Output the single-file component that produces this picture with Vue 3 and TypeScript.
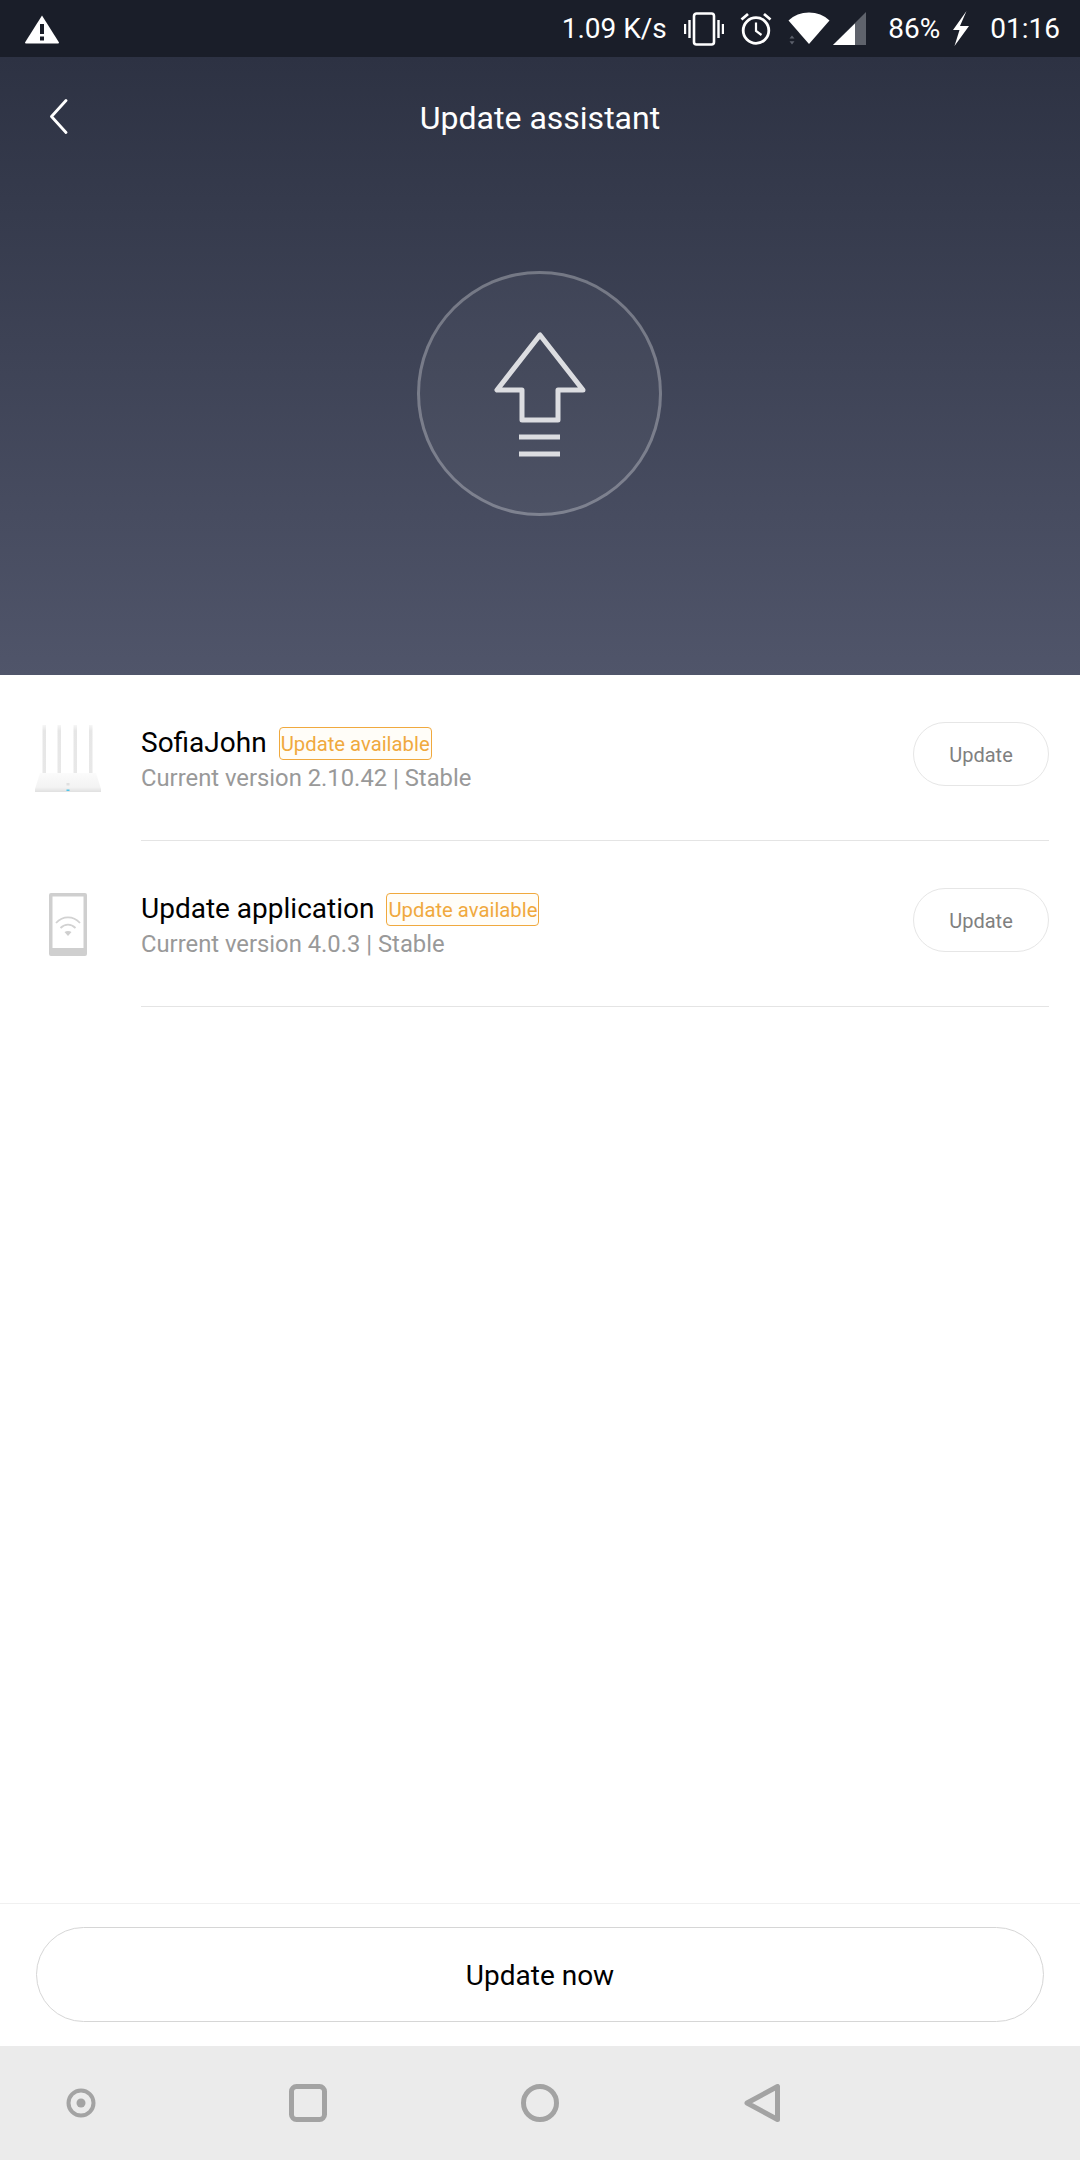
<script setup lang="ts">
interface Item {
  name: string
  version: string
  kind: 'router' | 'phone'
}
const items: Item[] = [
  { name: 'SofiaJohn', version: 'Current version 2.10.42 | Stable', kind: 'router' },
  { name: 'Update application', version: 'Current version 4.0.3 | Stable', kind: 'phone' },
]
</script>

<template>
  <div class="page">
    <header class="status">
      <svg class="warn" width="36" height="30" viewBox="0 0 36 30">
        <path d="M18 1.500 35 28.500a1 1 0 0 1-1 1H2a1 1 0 0 1-1-1Z" fill="#fff" />
        <rect x="16" y="10" width="4" height="10" fill="#1a1e29" />
        <rect x="16" y="22.500" width="4" height="4" fill="#1a1e29" />
      </svg>
      <div class="status-right">
        <span class="speed">1.09 K/s</span>
        <svg class="s-vib" width="40" height="34" viewBox="0 0 40 34" fill="none" stroke="#fff">
          <rect x="10" y="1.500" width="20" height="31" rx="2.500" stroke-width="2.600" />
          <path d="M5.500 8v18M1 12v10M34.500 8v18M39 12v10" stroke-width="2.400" />
        </svg>
        <svg class="s-alarm" width="32" height="33" viewBox="0 0 32 33" fill="none" stroke="#fff" stroke-width="2.800">
          <circle cx="16" cy="18.500" r="12.800" />
          <path d="M16 10.500v8.500l5.500 4" stroke-width="2.200" />
          <path d="M1.500 7.500 8 2M30.500 7.500 24 2" />
        </svg>
        <svg class="s-wifi" width="42" height="33" viewBox="0 0 42 33">
          <path d="M21 32 .5 8.500C6 3.200 13 .5 21 .5s15 2.700 20.500 8Z" fill="#fff" />
          <path d="M4 23.500 1.500 26.500h5ZM4 32.500 1.500 29.200h5Z" fill="#5c606b" />
        </svg>
        <svg class="s-signal" width="33" height="33" viewBox="0 0 33 33">
          <path d="M33 0V33H0Z" fill="#5f636c" />
          <path d="M22 11.500V33H0Z" fill="#fff" />
        </svg>
        <span class="pct">86%</span>
        <svg class="s-bolt" width="19" height="35" viewBox="0 0 19 35">
          <path d="M14.500 0 8 15H17L2.500 35 7.500 19H1Z" fill="#fff" />
        </svg>
        <span class="clock">01:16</span>
      </div>
    </header>

    <section class="hero">
      <div class="appbar">
        <svg class="back" width="19" height="35" viewBox="0 0 19 35" fill="none">
          <path d="M17 1.500 2.500 17.500 17 33.500" stroke="#fff" stroke-width="2.800" stroke-linecap="round" stroke-linejoin="round" />
        </svg>
        <h1 class="title">Update assistant</h1>
      </div>
      <div class="disc">
        <svg width="96" height="130" viewBox="0 0 96 130" fill="none" stroke="#dcdde1" stroke-width="5">
          <path d="M48 3 5 58H30V88H66V58H91Z" stroke-linejoin="round" />
          <path d="M27 105H68M27 122H68" />
        </svg>
      </div>
    </section>

    <main class="list">
      <article v-for="item in items" :key="item.name" class="row">
        <div class="thumb">
          <svg v-if="item.kind === 'router'" width="66" height="68" viewBox="0 0 66 68">
            <defs>
              <linearGradient id="bodyFill" x1="0" y1="0" x2="0" y2="1">
                <stop offset="0" stop-color="#fbfbfb" />
                <stop offset="0.75" stop-color="#f3f3f3" />
                <stop offset="1" stop-color="#e0e0e0" />
              </linearGradient>
              <linearGradient id="mast" x1="0" y1="0" x2="0" y2="1">
                <stop offset="0" stop-color="#f6f6f6" />
                <stop offset="0.12" stop-color="#e6e6e6" />
                <stop offset="1" stop-color="#e8e8e8" />
              </linearGradient>
            </defs>
            <g fill="url(#mast)">
              <rect x="7.500" y="1" width="3.500" height="49" />
              <rect x="22.500" y="1" width="3.500" height="49" />
              <rect x="38.500" y="1" width="3.500" height="49" />
              <rect x="54" y="1" width="3.500" height="49" />
            </g>
            <path d="M5 49H61L66 65V68H0V65Z" fill="url(#bodyFill)" />
            <rect x="31.500" y="65.500" width="3" height="1.500" fill="#4fc3e8" />
            <rect x="31.500" y="59" width="3" height="2.500" fill="#e0e0e0" />
          </svg>
          <svg v-else width="38" height="63" viewBox="0 0 38 63">
            <path fill-rule="evenodd" d="M2 0H36a2 2 0 0 1 2 2V61a2 2 0 0 1-2 2H2a2 2 0 0 1-2-2V2a2 2 0 0 1 2-2ZM3.500 3.500V55H34.500V3.500Z" fill="#cfcfcf" />
            <path d="M7 30C14 22.500 24 22.500 31 30M11.500 35C16 30.500 22 30.500 26.500 35" fill="none" stroke="#d2d2d2" stroke-width="1.800" />
            <path d="M19 43 15.500 39C17.500 37.500 20.500 37.500 22.500 39Z" fill="#cfcfcf" />
          </svg>
        </div>
        <div class="body">
          <div class="info">
            <div class="name-line">
              <span class="name">{{ item.name }}</span>
              <span class="tag">Update available</span>
            </div>
            <div class="version">{{ item.version }}</div>
          </div>
          <button class="small-btn" type="button">Update</button>
        </div>
      </article>
    </main>

    <footer class="action">
      <button class="now-btn" type="button">Update now</button>
    </footer>

    <nav class="navbar">
      <svg width="30" height="30" viewBox="0 0 30 30" fill="none">
        <circle cx="15" cy="15" r="12.500" stroke="#a3a3a3" stroke-width="4" />
        <circle cx="15" cy="15" r="4.500" fill="#a3a3a3" />
      </svg>
      <svg width="38" height="38" viewBox="0 0 38 38" fill="none">
        <rect x="2.500" y="2.500" width="33" height="33" rx="5" stroke="#a3a3a3" stroke-width="5" />
      </svg>
      <svg width="38" height="38" viewBox="0 0 38 38" fill="none">
        <circle cx="19" cy="19" r="16.500" stroke="#a3a3a3" stroke-width="5" />
      </svg>
      <svg width="36" height="38" viewBox="0 0 36 38" fill="none">
        <path d="M33.500 2.500V35.500L3 19Z" stroke="#a3a3a3" stroke-width="5" stroke-linejoin="round" />
      </svg>
    </nav>
  </div>
</template>

<style scoped>
.page {
  width: 1080px;
  height: 2160px;
  display: flex;
  flex-direction: column;
  background: #fff;
  font-family: Roboto, "Liberation Sans", sans-serif;
  overflow: hidden;
}
.status {
  height: 57px;
  flex: none;
  background: #1a1e29;
  color: #fff;
  display: flex;
  align-items: center;
  justify-content: space-between;
  padding: 0 20px 0 24px;
  box-sizing: border-box;
  font-size: 28px;
}
.status-right {
  display: flex;
  align-items: center;
}
.speed { margin-right: 17.500px; }
.s-alarm { margin-left: 16px; }
.s-wifi { margin-left: 16px; }
.s-signal { margin-left: 3px; }
.pct { margin-left: 22px; }
.s-bolt { margin-left: 12px; }
.clock { margin-left: 19px; }
.hero {
  height: 618px;
  flex: none;
  background: linear-gradient(180deg, #2d3243 0%, #50556a 100%);
  display: flex;
  flex-direction: column;
  align-items: center;
  box-sizing: border-box;
}
.appbar {
  width: 100%;
  height: 122px;
  position: relative;
  display: flex;
  align-items: center;
  padding-left: 49px;
  box-sizing: border-box;
  flex: none;
}
.back { margin-top: -3px; }
.title {
  position: absolute;
  left: 0;
  right: 0;
  margin: 0;
  text-align: center;
  font-size: 32px;
  font-weight: 400;
  color: #fff;
}
.disc {
  width: 245px;
  height: 245px;
  margin: 92px 0 0 -1px;
  border-radius: 50%;
  border: 3px solid rgba(255, 255, 255, 0.28);
  background: rgba(255, 255, 255, 0.035);
  box-sizing: border-box;
  display: flex;
  justify-content: center;
  padding-top: 58px;
}
.list {
  flex: 1;
  display: flex;
  flex-direction: column;
}
.row {
  display: flex;
  height: 166px;
  flex: none;
}
.thumb {
  width: 141px;
  flex: none;
  display: flex;
  justify-content: center;
  padding: 49px 5px 0 0;
  box-sizing: border-box;
  align-items: flex-start;
}
.row + .row .thumb { padding-top: 52px; }
.body {
  flex: 1;
  margin-right: 31px;
  border-bottom: 1px solid #e4e4e4;
  display: flex;
  justify-content: space-between;
  align-items: flex-start;
  box-sizing: border-box;
}
.info { padding-top: 47px; }
.name-line {
  display: flex;
  align-items: center;
  height: 40px;
}
.name {
  font-size: 28px;
  color: #000;
}
.tag {
  margin: 2px 0 0 12px;
  height: 33px;
  padding: 0 1px;
  border: 1.500px solid #f0a93e;
  border-radius: 4px;
  background: #fffdf8;
  color: #f0a93e;
  font-size: 20.300px;
  line-height: 33px;
  box-sizing: border-box;
  white-space: nowrap;
}
.version {
  margin-top: -1px;
  font-size: 23.800px;
  line-height: 34px;
  color: #999;
}
.small-btn {
  margin-top: 47px;
  width: 136px;
  height: 64px;
  border-radius: 32px;
  border: 1.500px solid #e6e6e6;
  background: #fff;
  color: #808080;
  font: 400 20px Roboto, "Liberation Sans", sans-serif;
  padding: 2px 0 0;
}
.action {
  flex: none;
  height: 143px;
  border-top: 1px solid #f0f0f0;
  display: flex;
  justify-content: center;
  padding-top: 23px;
  box-sizing: border-box;
}
.now-btn {
  width: 1008px;
  height: 95px;
  border-radius: 48px;
  border: 1.500px solid #d6d6d6;
  background: #fff;
  color: #000;
  font: 400 28px Roboto, "Liberation Sans", sans-serif;
  padding: 2px 0 0;
}
.navbar {
  flex: none;
  height: 114px;
  background: #ebebeb;
  display: flex;
  align-items: center;
  padding-left: 66px;
  gap: 0;
}
.navbar svg:nth-child(2) { margin-left: 193px; }
.navbar svg:nth-child(3) { margin-left: 194px; }
.navbar svg:nth-child(4) { margin-left: 185px; }
</style>
